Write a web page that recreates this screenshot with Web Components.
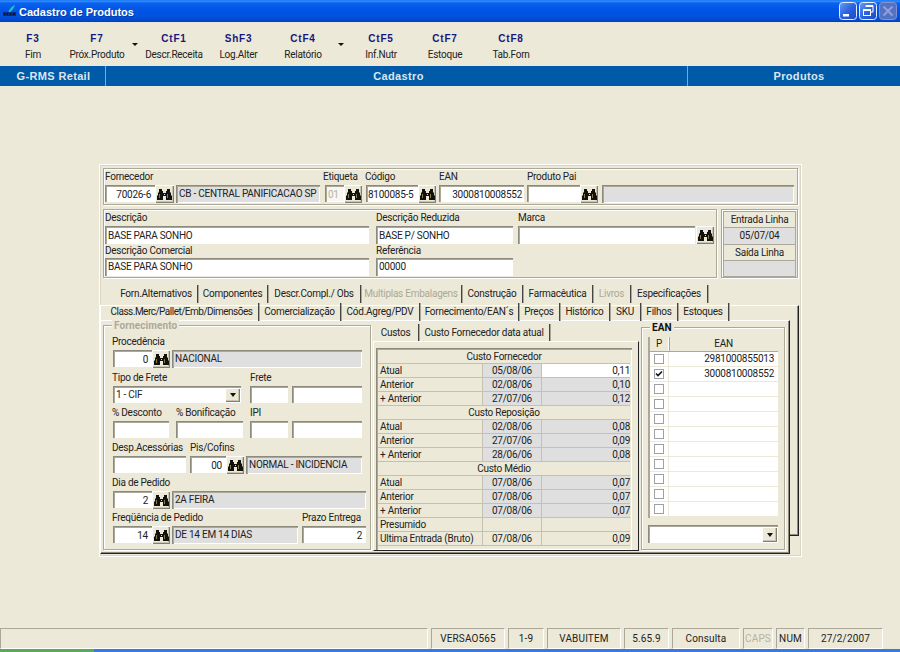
<!DOCTYPE html>
<html lang="pt"><head><meta charset="utf-8"><title>Cadastro de Produtos</title>
<style>
html,body{margin:0;padding:0;height:652px;overflow:hidden}
body{background:#ece9d8;display:flex;flex-direction:column;font:10px Roboto,"Liberation Sans",sans-serif;letter-spacing:-.25px;color:#222}
x-main{display:block;flex:1}
.r{display:flex}
</style></head><body>
<template id="bino"><svg width="15" height="13" viewBox="0 0 15 13" style="display:block"><path fill="#111" d="M2 1h3v2h1v2h3V3h1V1h3v3l1 1v2l1 1v4H9V8H6v4H0V8l1-1V5l1-1z"/><path fill="#8a7a3a" d="M2 6h1v4H2zM10 6h1v4h-1z"/><path fill="#ddd" d="M7 6h1v1H7z"/></svg></template>
<script>
const def=(n,css,html,init)=>customElements.define(n,class extends HTMLElement{connectedCallback(){if(this.shadowRoot)return;const s=this.attachShadow({mode:'open'});const a=k=>this.getAttribute(k)||'';s.innerHTML='<style>'+css+'</style>'+(typeof html=='function'?html(a,this):html);if(init)init(s,this)}});
const B=document.getElementById('bino').innerHTML;
const raised='background:#ece9d8;box-shadow:inset 1px 1px #fff,inset -1px -1px #808070,inset -2px -2px #c8c5b4;';
const sunken='box-shadow:inset 1px 1px #8c8a7c,inset 2px 2px #aca899,inset -1px -1px #fff;';
def('x-titlebar',`:host{display:flex;align-items:center;height:23px;box-sizing:border-box;padding:0 3px 0 2px;color:#fff;font:bold 11px "Liberation Sans",sans-serif;letter-spacing:0;
background:linear-gradient(#0a6af0 0,#3a93ff 1px,#0a62ee 3px,#0054e6 10px,#0052e0 16px,#0048c8 21px,#0a3aa8 22px,#e8e6d8 22px)}
.ic{width:15px;height:15px;margin-right:2px;flex:none}
.t{flex:1;text-shadow:1px 1px #0a3aa0}.b{width:18px;height:18px;margin-left:2px;margin-top:-1px;flex:none}`,
`<svg class="ic" viewBox="0 0 15 15"><path d="M6 9C7 5 10 2 13 1c-1 3-3 6-6 8z" fill="#19c6c0"/><path d="M1 8h13v4H1z" fill="#0a2a8a"/><path d="M2 9h1v2H2zM5 9h1v2H5zM8 9h1v2H8zM11 9h2v2h-2z" fill="#111"/></svg>
<span class="t"><slot></slot></span>
<svg class="b" viewBox="0 0 18 18"><defs><linearGradient id="g" x1="0" y1="0" x2="1" y2="1"><stop offset="0" stop-color="#6c9cf4"/><stop offset=".5" stop-color="#2a63e0"/><stop offset="1" stop-color="#1d47c4"/></linearGradient></defs><rect x=".5" y=".5" width="17" height="17" rx="3" fill="url(#g)" stroke="#e6eefc"/><rect x="4" y="12" width="6" height="2.5" fill="#fff"/></svg>
<svg class="b" viewBox="0 0 18 18"><rect x=".5" y=".5" width="17" height="17" rx="3" fill="url(#g)" stroke="#e6eefc"/><path d="M7 5V3.5h7V10h-2M7 4.5h7" fill="none" stroke="#fff" stroke-width="1"/><rect x="4.5" y="7.5" width="7" height="6" fill="none" stroke="#fff" stroke-width="1"/><path d="M4.5 8.5h7" stroke="#fff"/></svg>
<svg class="b" viewBox="0 0 18 18"><rect x=".5" y=".5" width="17" height="17" rx="3" fill="#5372c4" stroke="#7f94cf"/><path d="M4.5 4.5l9 9M13.5 4.5l-9 9" stroke="#8ea2d8" stroke-width="2"/></svg>`);
def('x-toolbar',`:host{display:flex;height:43px;box-sizing:border-box;padding-left:1px;background:#ece9d8}`,`<slot></slot>`);
def('x-tool',`:host{display:block;flex:none;text-align:center;width:64px;box-sizing:border-box;padding-top:10px}
b{display:block;height:14px;font:bold 10px/12px "Liberation Sans",sans-serif;letter-spacing:.8px;color:#17177a;margin-bottom:1px}span{display:block;line-height:13px;white-space:nowrap}`,
a=>`<b>${a('k')}</b><span><slot></slot></span>`);
def('x-arrow',`:host{display:block;flex:none;width:13px;position:relative}
i{display:block;width:0;height:0;border:3px solid transparent;border-top:3px solid #111;border-bottom:0;margin:20px 0 0 3px}`,`<i></i>`);
def('x-bluebar',`:host{display:flex;height:20px;background:#005aa8;color:#dde6ee;font:bold 11px/20px "Liberation Sans",sans-serif;letter-spacing:.35px;text-align:center}`,`<slot></slot>`);
def('x-bluecell',`:host{display:block;flex:none;box-sizing:border-box;border-right:1px solid #7fa6cc}:host(:last-child){border:0}`,`<slot></slot>`);
def('x-panel',`:host{display:block;box-sizing:border-box;width:703px;height:393px;margin:78px 0 0 99px;padding:3px 0 0 3px;border:1px solid #fff;box-shadow:inset 1px 1px #d8d5c4,inset -1px -1px #d8d5c4}`,`<slot></slot>`);
def('x-group',`:host{display:block;box-sizing:border-box;border:1px solid #aca899;box-shadow:inset 1px 1px #fff,1px 1px #fff}`,`<slot></slot>`);
def('x-f',`:host{display:block;flex:none}
label{display:block;height:15px;line-height:var(--lh,13px);white-space:nowrap;margin-left:var(--lx,0)}
div{display:flex}`,a=>`<label>${a('label')}</label><div><slot></slot></div>`);
def('x-in',`:host{display:block;flex:none;box-sizing:border-box;height:17px;line-height:15px;padding:2px 3px 0 3px;background:#fff;white-space:nowrap;overflow:hidden;${sunken}}
:host(.g){background:#dfdfdf;height:18px;padding:1px 2px 0 3px;line-height:15px}
:host(.e){text-align:right;padding-right:4px}:host(.d){color:#b6b3a4;background:#f7f6f0}`,`<slot></slot>`);
def('x-bino',`:host{display:flex;align-items:center;justify-content:center;flex:none;box-sizing:border-box;width:18px;height:18px;${raised}}`,B);
def('x-combo',`:host{display:flex;flex:none;box-sizing:border-box;height:18px;background:#fff;${sunken};padding:2px 1px 1px 3px;line-height:14px}
span{flex:1;white-space:nowrap}b{display:flex;align-items:center;justify-content:center;width:15px;${raised}}
i{width:0;height:0;border:3.5px solid transparent;border-top:4px solid #111;border-bottom:0}`,`<span><slot></slot></span><b><i></i></b>`);
def('x-entrada',`:host{display:grid;box-sizing:border-box;border:1px solid #aca899;box-shadow:inset 1px 1px #fff,1px 1px #fff;grid-auto-rows:1fr;padding:1px;text-align:center;line-height:15px}
div{border:1px solid #aca899;margin:0 0 -1px}div.g{background:#dfdfdf}`,
`<div>Entrada Linha</div><div class="g">05/07/04</div><div>Saída Linha</div><div class="g"></div>`);
def('x-tabrow',`:host{display:flex;box-sizing:border-box;align-items:stretch}`,`<slot></slot>`);
def('x-tab',`:host{display:block;flex:none;box-sizing:border-box;text-align:center;border-right:1px solid #444;box-shadow:1px 0 #aca899;white-space:nowrap;line-height:var(--tl,17px)}
:host(.d){color:#aca899}`,`<slot></slot>`);
def('x-page',`:host{display:block;box-sizing:border-box;background:#ece9d8;border-top:1px solid #fff;border-left:1px solid #fff;border-right:1px solid #222;border-bottom:1px solid #222;box-shadow:inset -1px -1px #8c8a7c}`,`<slot></slot>`);
def('x-fs',`:host{display:block;flex:none;box-sizing:border-box;position:relative;border:1px solid #aca899;box-shadow:inset 1px 1px #fff,1px 1px #fff}
em{position:absolute;left:8px;top:-7px;padding:0 2px;background:#ece9d8;font:bold 10px/13px Roboto,"Liberation Sans",sans-serif;letter-spacing:.1px;color:var(--lc,#aca899)}`,a=>`<em>${a('legend')}</em><slot></slot>`);
def('x-cost',`:host{display:block;flex:none;box-sizing:border-box;height:202px;padding:2px 2px 0 2px;${sunken}}
.row{display:grid;grid-template-columns:105px 59px 88px;height:14px;box-sizing:border-box;border-bottom:1px solid #c4c1b0;line-height:13px}
.h{grid-template-columns:1fr;text-align:center;}.h:first-child{height:13px}
.c{box-sizing:border-box;padding:0 2px;border-right:1px solid #c4c1b0;white-space:nowrap}.da{text-align:center;background:#dfdfdf}.v{text-align:right;background:#dfdfdf;border-right:0;padding-right:0}
.w{background:#fff}.p{background:none}`,'',(s)=>{
const R=[['Custo Fornecedor'],['Atual','05/08/06','0,11','w'],['Anterior','02/08/06','0,10'],['+ Anterior','27/07/06','0,12'],['Custo Reposição'],['Atual','02/08/06','0,08'],['Anterior','27/07/06','0,09'],['+ Anterior','28/06/06','0,08'],['Custo Médio'],['Atual','07/08/06','0,07'],['Anterior','07/08/06','0,07'],['+ Anterior','07/08/06','0,07'],['Presumido','','','p','p'],['Ultima Entrada (Bruto)','07/08/06','0,09','','p']];
s.innerHTML+=R.map(r=>r.length==1?`<div class="row h">${r[0]}</div>`:`<div class="row"><div class="c">${r[0]}</div><div class="c da ${r[4]||''}">${r[1]}</div><div class="c v ${r[3]||''} ${r[4]||''}">${r[2]}</div></div>`).join('')});
def('x-eangrid',`:host{display:block;box-sizing:border-box;height:181px;padding-left:2px;box-shadow:inset 2px 0 #aca899,inset 0 2px #aca899}
.row{display:grid;grid-template-columns:19px 109px;height:15px;box-sizing:border-box;background:#fff;border-bottom:1px solid #ece9d8}
.row>div:first-child{border-right:1px solid #ece9d8;display:flex;justify-content:center;align-items:center}
.ean{text-align:right;line-height:14px;padding-right:4px}
.hd{height:15px;background:#ece9d8;border-bottom:1px solid #aca899;line-height:14px;text-align:center}.hd>div:first-child{border-right:1px solid #fff;box-shadow:1px 0 #aca899}
svg{display:block}`,'',(s)=>{
const cb=c=>`<svg width="10" height="10" viewBox="0 0 10 10"><rect x=".5" y=".5" width="9" height="9" fill="#fff" stroke="#a0a0a0"/>${c?'<path d="M2 4.5l2 2 4-4" fill="none" stroke="#111" stroke-width="1.6"/>':''}</svg>`;
let h=`<div class="row hd"><div>P</div><div>EAN</div></div>`;
['2981000855013','3000810008552','','','','','','','','',''].forEach((e,i)=>h+=`<div class="row"><div>${cb(i==1)}</div><div class="ean">${e}</div></div>`);
s.innerHTML+=h});
def('x-status',`:host{display:flex;height:21px;gap:3px;box-sizing:border-box;padding-right:17px}`,`<slot></slot>`);
def('x-sp',`:host{display:block;flex:none;box-sizing:border-box;text-align:center;line-height:19px;letter-spacing:.15px;border-top:1px solid #aca899;border-left:1px solid #aca899;border-right:1px solid #fff;border-bottom:1px solid #fff;white-space:nowrap}:host(.d){color:#b6b3a4}`,`<slot></slot>`);
def('x-task',`:host{display:block;height:3px;background:linear-gradient(90deg,#5aa85a 94px,#3b78e0 94px)}`,``);
</script>

<x-titlebar>Cadastro de Produtos</x-titlebar>
<x-toolbar>
<x-tool k="F3">Fim</x-tool><x-tool k="F7">Próx.Produto</x-tool><x-arrow></x-arrow><x-tool k="CtF1">Descr.Receita</x-tool><x-tool k="ShF3" style="width:65px">Log.Alter</x-tool><x-tool k="CtF4">Relatório</x-tool><x-arrow style="width:14px"></x-arrow><x-tool k="CtF5">Inf.Nutr</x-tool><x-tool k="CtF7">Estoque</x-tool><x-tool k="CtF8" style="width:68px">Tab.Forn</x-tool>
</x-toolbar>
<x-bluebar><x-bluecell style="width:106px;padding-left:2px">G-RMS Retail</x-bluecell><x-bluecell style="width:582px;padding-left:4px">Cadastro</x-bluecell><x-bluecell style="flex:1;padding-left:10px">Produtos</x-bluecell></x-bluebar>
<x-main>
<x-panel>
 <x-group class="r" style="display:flex;width:695px;height:37px;padding:1px 0 0 1px">
  <x-f label="Fornecedor"><x-in class="e" style="width:50px">70026-6</x-in><x-bino style="width:19px"></x-bino><x-in class="g" style="width:144px;margin-left:2px">CB - CENTRAL PANIFICACAO SP</x-in></x-f>
  <x-f label="Etiqueta" style="margin-left:3px"><x-in class="d" style="width:19px;margin-left:2px;padding-left:3px">01</x-in><x-bino></x-bino></x-f>
  <x-f label="Código" style="margin-left:3px"><x-in style="width:52px;margin-left:1px;padding-left:2px;padding-right:0">8100085-5</x-in><x-bino></x-bino></x-f>
  <x-f label="EAN" style="margin-left:3px"><x-in class="e" style="width:85px;padding-right:2px">3000810008552</x-in></x-f>
  <x-f label="Produto Pai" style="margin-left:3px"><x-in style="width:53px"></x-in><x-bino></x-bino><x-in class="g" style="width:192px;margin-left:4px"></x-in></x-f>
 </x-group>
 <div class="r" style="margin-top:4px;gap:4px;height:69px">
  <x-group style="width:614px;padding:1px 0 0 1px">
   <div class="r" style="height:32px">
    <x-f label="Descrição"><x-in style="width:264px;height:18px">BASE PARA SONHO</x-in></x-f>
    <x-f label="Descrição Reduzida" style="margin-left:7px"><x-in style="width:137px;height:18px">BASE P/ SONHO</x-in></x-f>
    <x-f label="Marca" style="margin-left:5px"><x-in style="width:177px;height:18px"></x-in><x-bino style="margin-left:1px"></x-bino></x-f>
   </div>
   <div class="r" style="--lh:15px">
    <x-f label="Descrição Comercial"><x-in style="width:264px;height:18px;padding-top:1px">BASE PARA SONHO</x-in></x-f>
    <x-f label="Referência" style="margin-left:7px"><x-in style="width:137px;height:18px;padding-top:1px">00000</x-in></x-f>
   </div>
  </x-group>
  <x-entrada style="width:77px"></x-entrada>
 </div>
 <div style="display:grid;margin:7px 0 0 -3px;width:702px;height:272px">
  <x-page style="grid-area:1/1;margin-top:20px;width:699px;height:231px"></x-page>
  <x-page style="grid-area:1/1;margin-top:35px;width:690px;height:234px;display:flex;padding:2px 0 0 2px">
   <x-fs legend="Fornecimento" style="width:268px;height:225px;margin-top:2px;padding:9px 0 0 9px;--lx:-1px">
    <div class="r" style="height:36px"><x-f label="Procedência"><x-in class="e" style="width:39px">0</x-in><x-bino></x-bino><x-in class="g" style="width:190px;margin-left:2px">NACIONAL</x-in></x-f></div>
    <div class="r" style="height:35px"><x-f label="Tipo de Frete"><x-combo style="width:128px;height:17px">1 - CIF</x-combo></x-f><x-f label="Frete" style="margin-left:9px;--lx:0"><x-in style="width:38px"></x-in><x-in style="width:70px;margin-left:4px"></x-in></x-f></div>
    <div class="r" style="height:35px"><x-f label="% Desconto"><x-in style="width:56px"></x-in></x-f><x-f label="% Bonificação" style="margin-left:7px;--lx:0"><x-in style="width:67px"></x-in></x-f><x-f label="IPI" style="margin-left:7px;--lx:0"><x-in style="width:38px"></x-in><x-in style="width:70px;margin-left:4px"></x-in></x-f></div>
    <div class="r" style="height:35px"><x-f label="Desp.Acessórias"><x-in style="width:73px"></x-in></x-f><x-f label="Pis/Cofins" style="margin-left:4px;--lx:0"><x-in class="e" style="width:36px">00</x-in><x-bino></x-bino><x-in class="g" style="width:116px;margin-left:2px">NORMAL - INCIDENCIA</x-in></x-f></div>
    <div class="r" style="height:35px"><x-f label="Dia de Pedido"><x-in class="e" style="width:39px">2</x-in><x-bino></x-bino><x-in class="g" style="width:194px;margin-left:2px">2A FEIRA</x-in></x-f></div>
    <div class="r"><x-f label="Freqüência de Pedido"><x-in class="e" style="width:39px">14</x-in><x-bino></x-bino><x-in class="g" style="width:126px;margin-left:2px">DE 14 EM 14 DIAS</x-in></x-f><x-f label="Prazo Entrega" style="margin-left:4px;--lx:0"><x-in class="e" style="width:64px">2</x-in></x-f></div>
   </x-fs>
   <div style="flex:none;width:266px;margin-left:2px;margin-top:-1px">
    <x-tabrow style="height:19px;padding-top:2px"><x-tab style="width:46px">Custos</x-tab><x-tab style="width:131px">Custo Fornecedor data atual</x-tab></x-tabrow>
    <x-page style="height:210px;padding:6px 0 0 2px;box-shadow:none"><x-cost style="width:256px"></x-cost></x-page>
   </div>
   <x-fs legend="EAN" style="width:144px;height:223px;margin:4px 0 0 2px;padding:9px 0 0 6px;--lc:#111">
    <x-eangrid style="width:130px"></x-eangrid>
    <x-combo style="width:130px;margin-top:7px"></x-combo>
   </x-fs>
  </x-page>
  <div style="grid-area:1/1;align-self:start">
   <x-tabrow style="height:18px;padding-left:15px;--tl:18px"><x-tab style="width:83px">Forn.Alternativos</x-tab><x-tab style="width:70px">Componentes</x-tab><x-tab style="width:93px">Descr.Compl./ Obs</x-tab><x-tab class="d" style="width:101px">Multiplas Embalagens</x-tab><x-tab style="width:61px">Construção</x-tab><x-tab style="width:70px">Farmacêutica</x-tab><x-tab class="d" style="width:38px">Livros</x-tab><x-tab style="width:77px">Especificações</x-tab></x-tabrow>
   <x-tabrow style="height:18px"><x-tab style="width:159px;padding-left:5px;letter-spacing:-.5px">Class.Merc/Pallet/Emb/Dimensões</x-tab><x-tab style="width:82px">Comercialização</x-tab><x-tab style="width:79px">Cód.Agreg/PDV</x-tab><x-tab style="width:99px">Fornecimento/EAN´s</x-tab><x-tab style="width:41px">Preços</x-tab><x-tab style="width:50px">Histórico</x-tab><x-tab style="width:31px">SKU</x-tab><x-tab style="width:37px">Filhos</x-tab><x-tab style="width:51px">Estoques</x-tab></x-tabrow>
  </div>
 </div>
</x-panel>
</x-main>
<x-status><x-sp style="width:428px"></x-sp><x-sp style="width:74px">VERSAO565</x-sp><x-sp style="width:36px">1-9</x-sp><x-sp style="width:74px">VABUITEM</x-sp><x-sp style="width:45px">5.65.9</x-sp><x-sp style="width:68px">Consulta</x-sp><x-sp class="d" style="width:30px">CAPS</x-sp><x-sp style="width:29px">NUM</x-sp><x-sp style="width:75px">27/2/2007</x-sp></x-status>
<x-task></x-task>
</body></html>
